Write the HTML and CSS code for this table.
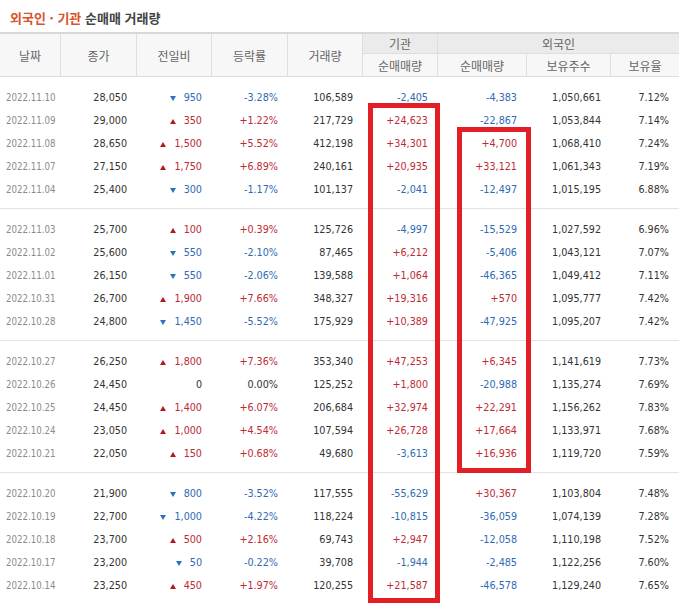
FILE: index.html
```html
<!DOCTYPE html>
<html lang="ko">
<head>
<meta charset="utf-8">
<title>외국인 · 기관 순매매 거래량</title>
<link rel="stylesheet" href="styles.css">
</head>
<body>
<div class="page">
  <h2 class="title"><span class="accent">외국인 · 기관</span> 순매매 거래량</h2>
  <div class="table">
    <div class="head">
      <div class="th span c1">날짜</div>
      <div class="th span c2">종가</div>
      <div class="th span c3">전일비</div>
      <div class="th span c4">등락률</div>
      <div class="th span c5">거래량</div>
      <div class="th grp c6">기관</div>
      <div class="th grp c7 last">외국인</div>
      <div class="th sub c6">순매매량</div>
      <div class="th sub c7">순매매량</div>
      <div class="th sub c8">보유주수</div>
      <div class="th sub c9 last">보유율</div>
    </div>

    <div class="group">
      <div class="row"><div class="c date">2022.11.10</div><div class="c">28,050</div><div class="c dn"><i class="tri tri-dn"></i>950</div><div class="c dn">-3.28%</div><div class="c">106,589</div><div class="c dn">-2,405</div><div class="c dn">-4,383</div><div class="c">1,050,661</div><div class="c">7.12%</div></div>
      <div class="row"><div class="c date">2022.11.09</div><div class="c">29,000</div><div class="c up"><i class="tri tri-up"></i>350</div><div class="c up">+1.22%</div><div class="c">217,729</div><div class="c up">+24,623</div><div class="c dn">-22,867</div><div class="c">1,053,844</div><div class="c">7.14%</div></div>
      <div class="row"><div class="c date">2022.11.08</div><div class="c">28,650</div><div class="c up"><i class="tri tri-up"></i>1,500</div><div class="c up">+5.52%</div><div class="c">412,198</div><div class="c up">+34,301</div><div class="c up">+4,700</div><div class="c">1,068,410</div><div class="c">7.24%</div></div>
      <div class="row"><div class="c date">2022.11.07</div><div class="c">27,150</div><div class="c up"><i class="tri tri-up"></i>1,750</div><div class="c up">+6.89%</div><div class="c">240,161</div><div class="c up">+20,935</div><div class="c up">+33,121</div><div class="c">1,061,343</div><div class="c">7.19%</div></div>
      <div class="row"><div class="c date">2022.11.04</div><div class="c">25,400</div><div class="c dn"><i class="tri tri-dn"></i>300</div><div class="c dn">-1.17%</div><div class="c">101,137</div><div class="c dn">-2,041</div><div class="c dn">-12,497</div><div class="c">1,015,195</div><div class="c">6.88%</div></div>
    </div>

    <div class="group">
      <div class="row"><div class="c date">2022.11.03</div><div class="c">25,700</div><div class="c up"><i class="tri tri-up"></i>100</div><div class="c up">+0.39%</div><div class="c">125,726</div><div class="c dn">-4,997</div><div class="c dn">-15,529</div><div class="c">1,027,592</div><div class="c">6.96%</div></div>
      <div class="row"><div class="c date">2022.11.02</div><div class="c">25,600</div><div class="c dn"><i class="tri tri-dn"></i>550</div><div class="c dn">-2.10%</div><div class="c">87,465</div><div class="c up">+6,212</div><div class="c dn">-5,406</div><div class="c">1,043,121</div><div class="c">7.07%</div></div>
      <div class="row"><div class="c date">2022.11.01</div><div class="c">26,150</div><div class="c dn"><i class="tri tri-dn"></i>550</div><div class="c dn">-2.06%</div><div class="c">139,588</div><div class="c up">+1,064</div><div class="c dn">-46,365</div><div class="c">1,049,412</div><div class="c">7.11%</div></div>
      <div class="row"><div class="c date">2022.10.31</div><div class="c">26,700</div><div class="c up"><i class="tri tri-up"></i>1,900</div><div class="c up">+7.66%</div><div class="c">348,327</div><div class="c up">+19,316</div><div class="c up">+570</div><div class="c">1,095,777</div><div class="c">7.42%</div></div>
      <div class="row"><div class="c date">2022.10.28</div><div class="c">24,800</div><div class="c dn"><i class="tri tri-dn"></i>1,450</div><div class="c dn">-5.52%</div><div class="c">175,929</div><div class="c up">+10,389</div><div class="c dn">-47,925</div><div class="c">1,095,207</div><div class="c">7.42%</div></div>
    </div>

    <div class="group">
      <div class="row"><div class="c date">2022.10.27</div><div class="c">26,250</div><div class="c up"><i class="tri tri-up"></i>1,800</div><div class="c up">+7.36%</div><div class="c">353,340</div><div class="c up">+47,253</div><div class="c up">+6,345</div><div class="c">1,141,619</div><div class="c">7.73%</div></div>
      <div class="row"><div class="c date">2022.10.26</div><div class="c">24,450</div><div class="c">0</div><div class="c">0.00%</div><div class="c">125,252</div><div class="c up">+1,800</div><div class="c dn">-20,988</div><div class="c">1,135,274</div><div class="c">7.69%</div></div>
      <div class="row"><div class="c date">2022.10.25</div><div class="c">24,450</div><div class="c up"><i class="tri tri-up"></i>1,400</div><div class="c up">+6.07%</div><div class="c">206,684</div><div class="c up">+32,974</div><div class="c up">+22,291</div><div class="c">1,156,262</div><div class="c">7.83%</div></div>
      <div class="row"><div class="c date">2022.10.24</div><div class="c">23,050</div><div class="c up"><i class="tri tri-up"></i>1,000</div><div class="c up">+4.54%</div><div class="c">107,594</div><div class="c up">+26,728</div><div class="c up">+17,664</div><div class="c">1,133,971</div><div class="c">7.68%</div></div>
      <div class="row"><div class="c date">2022.10.21</div><div class="c">22,050</div><div class="c up"><i class="tri tri-up"></i>150</div><div class="c up">+0.68%</div><div class="c">49,680</div><div class="c dn">-3,613</div><div class="c up">+16,936</div><div class="c">1,119,720</div><div class="c">7.59%</div></div>
    </div>

    <div class="group">
      <div class="row"><div class="c date">2022.10.20</div><div class="c">21,900</div><div class="c dn"><i class="tri tri-dn"></i>800</div><div class="c dn">-3.52%</div><div class="c">117,555</div><div class="c dn">-55,629</div><div class="c up">+30,367</div><div class="c">1,103,804</div><div class="c">7.48%</div></div>
      <div class="row"><div class="c date">2022.10.19</div><div class="c">22,700</div><div class="c dn"><i class="tri tri-dn"></i>1,000</div><div class="c dn">-4.22%</div><div class="c">118,224</div><div class="c dn">-10,815</div><div class="c dn">-36,059</div><div class="c">1,074,139</div><div class="c">7.28%</div></div>
      <div class="row"><div class="c date">2022.10.18</div><div class="c">23,700</div><div class="c up"><i class="tri tri-up"></i>500</div><div class="c up">+2.16%</div><div class="c">69,743</div><div class="c up">+2,947</div><div class="c dn">-12,058</div><div class="c">1,110,198</div><div class="c">7.52%</div></div>
      <div class="row"><div class="c date">2022.10.17</div><div class="c">23,200</div><div class="c dn"><i class="tri tri-dn"></i>50</div><div class="c dn">-0.22%</div><div class="c">39,708</div><div class="c dn">-1,944</div><div class="c dn">-2,485</div><div class="c">1,122,256</div><div class="c">7.60%</div></div>
      <div class="row"><div class="c date">2022.10.14</div><div class="c">23,250</div><div class="c up"><i class="tri tri-up"></i>450</div><div class="c up">+1.97%</div><div class="c">120,255</div><div class="c up">+21,587</div><div class="c dn">-46,578</div><div class="c">1,129,240</div><div class="c">7.65%</div></div>
    </div>
  </div>

  <div class="mark mark-inst"></div>
  <div class="mark mark-frgn"></div>
</div>
</body>
</html>
```

FILE: styles.css
```css
* { box-sizing: border-box; }

html, body {
  margin: 0;
  padding: 0;
  background: #fff;
}

.page {
  position: relative;
  width: 679px;
  height: 604px;
  overflow: hidden;
  font-family: "DejaVu Sans Condensed", "DejaVu Sans", sans-serif;
  font-stretch: condensed;
}

.title {
  margin: 0;
  height: 32px;
  padding: 8px 0 0 10px;
  font-family: "Noto Sans CJK KR", sans-serif;
  font-size: 13px;
  line-height: 20px;
  font-weight: bold;
  color: #444;
  letter-spacing: 0;
}

.title .accent {
  color: #d6532d;
}

.head,
.row {
  display: grid;
  grid-template-columns: 61px 76px 75px 76px 75px 75px 89px 84px 1fr;
}

.head {
  grid-template-rows: 20px 22px;
  border-top: 2px solid #d8d8d8;
  border-bottom: 1px solid #dedede;
  font-family: "Noto Sans CJK KR", sans-serif;
  font-size: 12px;
  color: #666;
  text-align: center;
}

.th {
  display: flex;
  align-items: center;
  justify-content: center;
  border-right: 1px solid #dedede;
  background: #f7f7f7;
}

.th.last { border-right: none; }

.th.span { grid-row: 1 / 3; }

.th.grp {
  grid-row: 1;
  background: #ebebeb;
  border-bottom: 1px solid #dedede;
}

.th.sub { grid-row: 2; }

.c1 { grid-column: 1; }
.c2 { grid-column: 2; }
.c3 { grid-column: 3; }
.c4 { grid-column: 4; }
.c5 { grid-column: 5; }
.c6 { grid-column: 6; }
.c7 { grid-column: 7; }
.th.grp.c7 { grid-column: 7 / 10; }
.c8 { grid-column: 8; }
.c9 { grid-column: 9; }

.group {
  padding: 9px 0 7px;
}

.group + .group {
  border-top: 1px solid #e3e3e3;
}

.row {
  height: 23px;
  line-height: 23px;
  font-size: 10.7px;
  color: #333;
}

.c {
  text-align: right;
  padding-right: 10px;
  white-space: nowrap;
}

.c.date {
  text-align: left;
  padding-left: 6px;
  padding-right: 0;
  font-size: 9.6px;
  color: #8a8a8a;
}

.c.up { color: #bd2a33; }
.c.dn { color: #2d6bb2; }

.tri {
  display: inline-block;
  width: 0;
  height: 0;
  margin-right: 8px;
  border-left: 3px solid transparent;
  border-right: 3px solid transparent;
  vertical-align: baseline;
}

.tri-up { border-bottom: 5px solid #b5171f; }
.tri-dn { border-top: 5px solid #2f6fc4; }

.mark {
  position: absolute;
  border: 5px solid #e41e26;
}

.mark-inst {
  left: 368px;
  top: 103px;
  width: 72px;
  height: 500px;
}

.mark-frgn {
  left: 457px;
  top: 127px;
  width: 74px;
  height: 346px;
}
```
